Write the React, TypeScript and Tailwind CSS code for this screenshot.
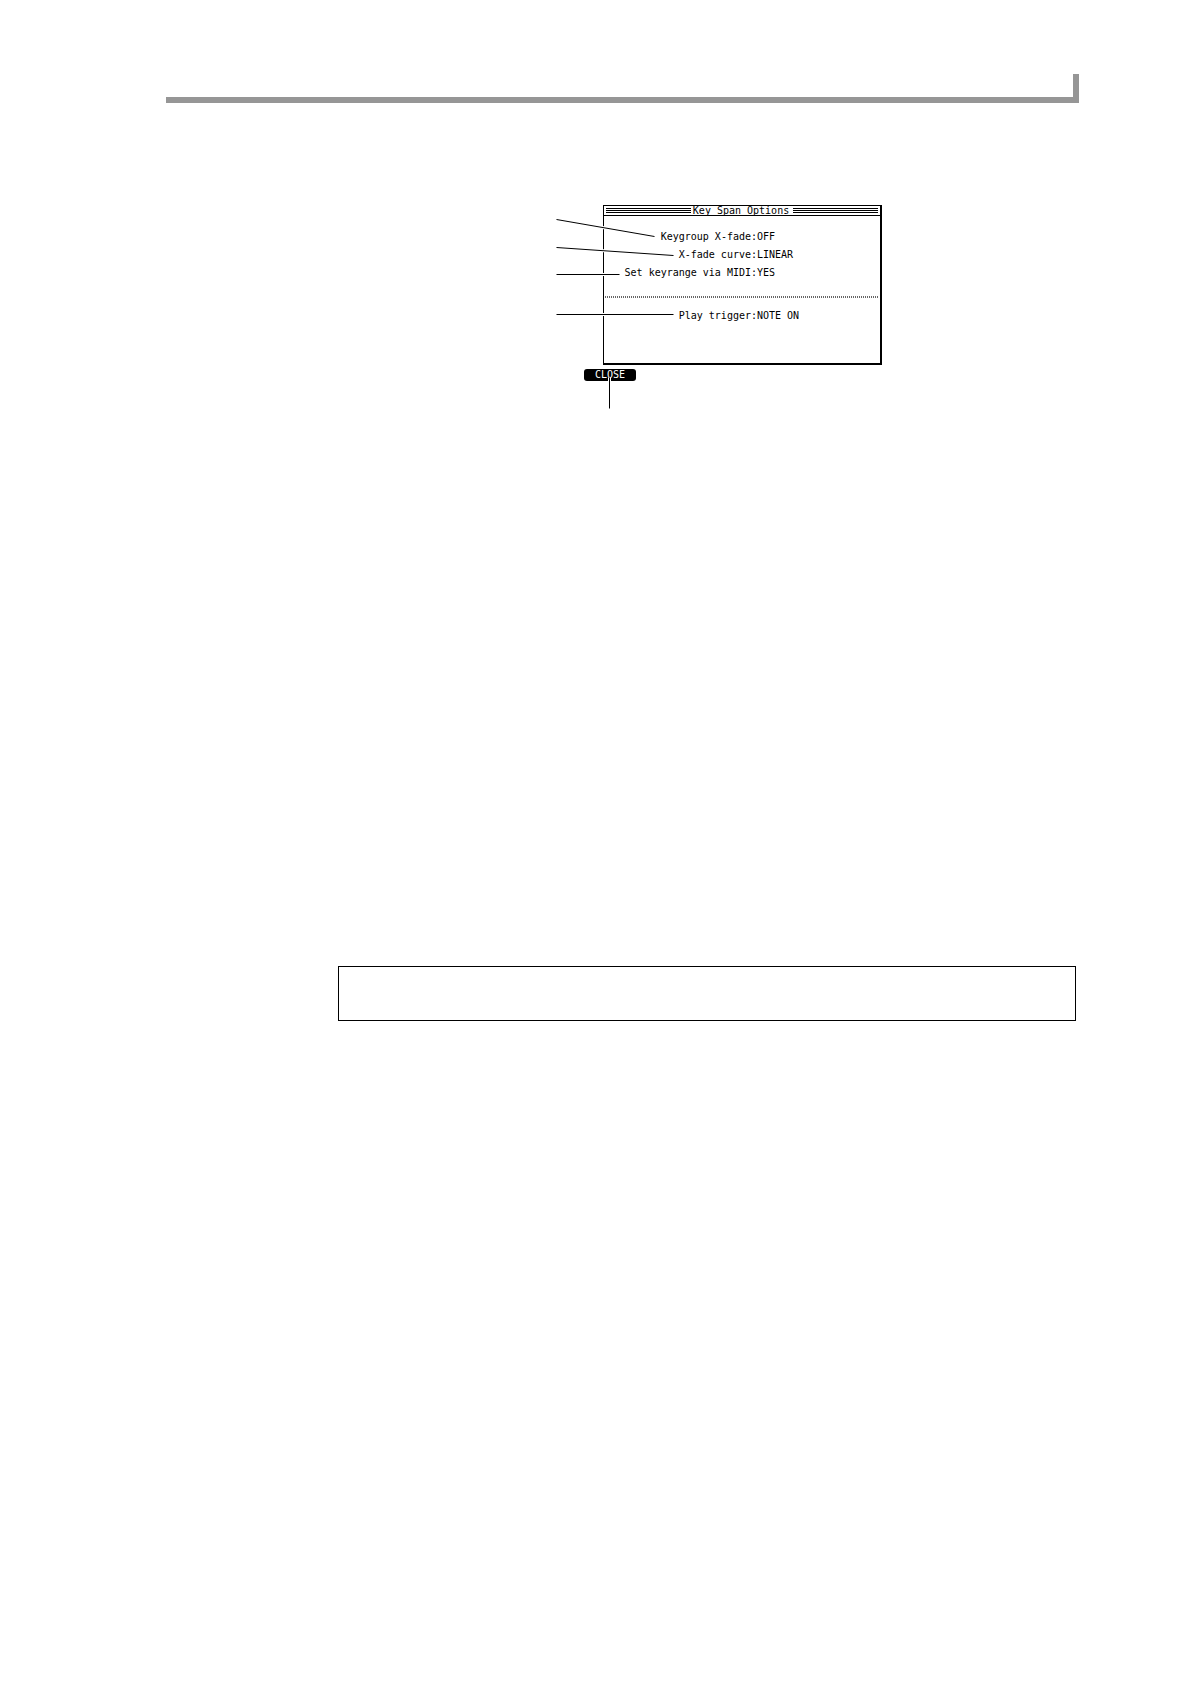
type Option = {
  label: string;
  value: string;
};

const keygroupOptions: Option[] = [
  { label: 'Keygroup X-fade:', value: 'OFF' },
  { label: 'X-fade curve:', value: 'LINEAR' },
  { label: 'Set keyrange via MIDI:', value: 'YES' },
];

const triggerOptions: Option[] = [{ label: 'Play trigger:', value: 'NOTE ON' }];

// Callout lines, in the figure's own coordinates
const leaders = [
  { x1: 0, y1: 14, x2: 98, y2: 31 },
  { x1: 0, y1: 42, x2: 117, y2: 50 },
  { x1: 0, y1: 69, x2: 63, y2: 69 },
  { x1: 0, y1: 109, x2: 117, y2: 109 },
  { x1: 53, y1: 172, x2: 53, y2: 203 },
];

function Stripes() {
  return (
    <div className="flex flex-1 flex-col gap-px">
      <div className="h-px bg-black" />
      <div className="h-px bg-black" />
      <div className="h-px bg-black" />
    </div>
  );
}

function OptionRows({ options }: { options: Option[] }) {
  return (
    <dl className="flex flex-col">
      {options.map((option) => (
        <div key={option.label} className="flex h-[18px] items-center whitespace-pre">
          <dt className="w-[153px] text-right">{option.label}</dt>
          <dd>{option.value}</dd>
        </div>
      ))}
    </dl>
  );
}

function OptionsWindow() {
  return (
    <section className="ml-[47px] flex h-[160px] flex-col border-t border-r-2 border-b-2 border-l border-black bg-white">
      <header className="flex h-[10px] items-center gap-[2px] border-b border-black px-[2px]">
        <Stripes />
        <h1 className="pr-[2px] leading-[10px] whitespace-pre">Key Span Options</h1>
        <Stripes />
      </header>
      <div className="pt-[12px] pb-[14px]">
        <OptionRows options={keygroupOptions} />
      </div>
      <div className="mx-px h-[2px] bg-[repeating-linear-gradient(90deg,#666_0_1px,#fff_1px_2px)]" />
      <div className="pt-[9px]">
        <OptionRows options={triggerOptions} />
      </div>
    </section>
  );
}

export default function App() {
  return (
    <div className="min-h-screen bg-white pt-[74px] pr-[111px] pl-[166px] font-['DejaVu_Sans_Mono',monospace] text-[10px] leading-[12px] text-black">
      <header className="h-[29px] border-r-6 border-b-6 border-[#969696]" />

      <main className="mr-[3px] ml-[172px] pt-[102px]">
        <figure className="relative ml-[218px] w-[326px]">
          <OptionsWindow />
          <button
            type="button"
            className="mt-[4px] ml-[28px] block h-[12px] w-[52px] rounded-[3px] bg-black text-center leading-[12px] text-white"
          >
            CLOSE
          </button>
          <svg
            className="pointer-events-none absolute top-0 left-0"
            width="326"
            height="204"
            viewBox="0 0 326 204"
            aria-hidden="true"
          >
            {leaders.map((line) => (
              <g key={line.y1}>
                <line {...line} transform="translate(.5 .5)" stroke="#fff" strokeWidth="3" />
                <line {...line} transform="translate(.5 .5)" stroke="#000" strokeWidth="1" />
              </g>
            ))}
          </svg>
        </figure>

        <aside className="mt-[585px] h-[55px] border border-black" />
      </main>
    </div>
  );
}
